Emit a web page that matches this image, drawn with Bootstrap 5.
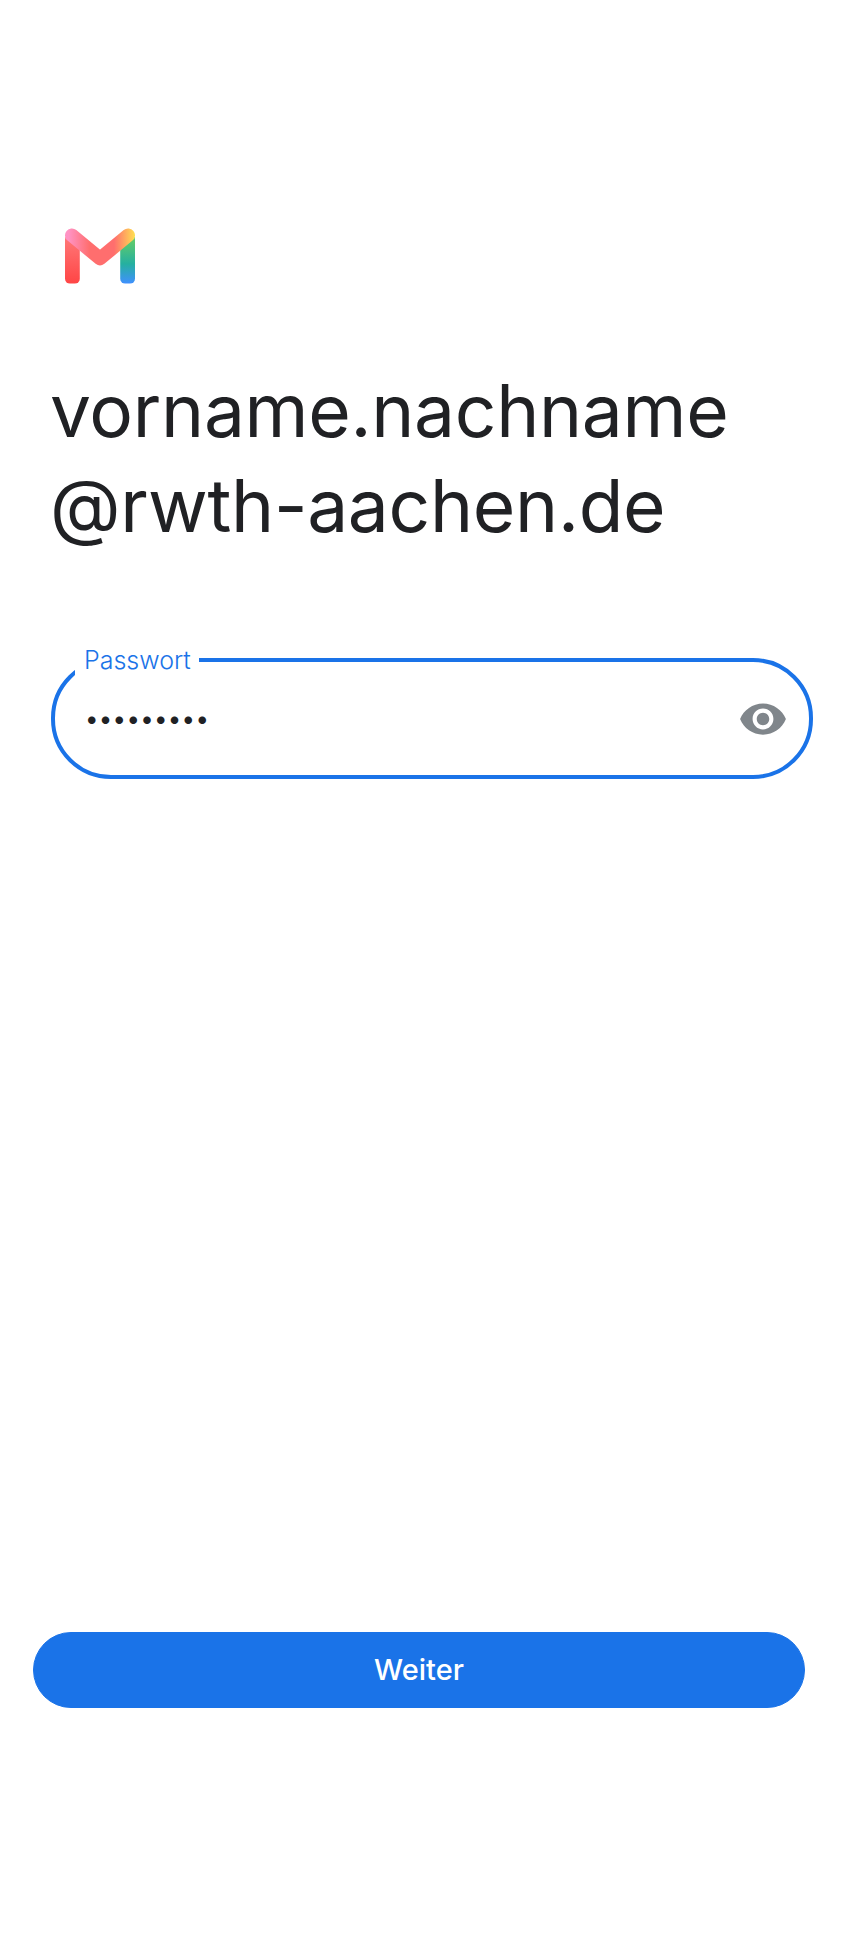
<!DOCTYPE html>
<html lang="de">
<head>
  <meta charset="UTF-8" />
  <meta name="viewport" content="width=device-width, initial-scale=1" />
  <title>Passwort</title>
  <link href="https://cdn.jsdelivr.net/npm/bootstrap@5.3.3/dist/css/bootstrap.min.css" rel="stylesheet" />
  <style>
    body {
      background: #fff;
      color: #202124;
      font-family: "Inter", "Liberation Sans", sans-serif;
    }
    .seite {
      height: 1939px;
      padding: 228px 51px 231px 33px;
    }
    .gmail-logo {
      width: 70px;
      height: 56px;
      margin-left: 32px;
    }
    .konto {
      margin: 79px 0 0 17px;
      font-family: "Inter", sans-serif;
      font-size: 73px;
      line-height: 95px;
      font-weight: 400;
      letter-spacing: -0.3px;
      color: #202124;
    }
    .feld {
      height: 121px;
      margin: 105px 0 0 18px;
      border: 4px solid #1a73e8;
      border-radius: 60px;
      padding: 0 21px 0 30px;
    }
    .feld-label {
      position: absolute;
      left: 20px;
      top: -16px;
      padding: 0 8px 0 9px;
      background: #fff;
      color: #1a73e8;
      font-size: 25px;
      font-weight: 300;
      line-height: 29px;
    }
    .feld-input,
    .feld-input:focus {
      border: 0;
      box-shadow: none;
      padding: 0;
      background: transparent;
      color: #202124;
      font-size: 24px;
      letter-spacing: 0.3px;
    }
    .auge {
      width: 50px;
      height: 50px;
      fill: #80868b;
    }
    .weiter-btn {
      width: 772px;
      height: 76px;
      border-radius: 38px;
      font-size: 29px;
      font-weight: 500;
      --bs-btn-bg: #1a73e8;
      --bs-btn-border-color: #1a73e8;
      --bs-btn-hover-bg: #1a73e8;
      --bs-btn-hover-border-color: #1a73e8;
    }
  </style>
</head>
<body>
  <main class="seite d-flex flex-column">
    <svg class="gmail-logo flex-shrink-0" viewBox="0 0 71 56" role="img" aria-label="Gmail">
      <defs>
        <linearGradient id="linksG" x1="0" y1="0" x2="0" y2="1">
          <stop offset="0" stop-color="#ff7b7b" />
          <stop offset="1" stop-color="#ff4545" />
        </linearGradient>
        <linearGradient id="rechtsG" x1="0" y1="0" x2="0" y2="1">
          <stop offset="0.15" stop-color="#5cc96e" />
          <stop offset="0.6" stop-color="#25b0a0" />
          <stop offset="1" stop-color="#4090ff" />
        </linearGradient>
        <linearGradient id="mitteG" gradientUnits="userSpaceOnUse" x1="0" y1="0" x2="71" y2="0">
          <stop offset="0.05" stop-color="#ff93c4" />
          <stop offset="0.35" stop-color="#ff6e6e" />
          <stop offset="0.7" stop-color="#ff6e6e" />
          <stop offset="1" stop-color="#ffe050" />
        </linearGradient>
      </defs>
      <rect x="0" y="6" width="15" height="50" rx="5" fill="url(#linksG)" />
      <rect x="56" y="6" width="15" height="50" rx="5" fill="url(#rechtsG)" />
      <path d="M7 7 35.5 30.5 64 7" fill="none" stroke="url(#mitteG)" stroke-width="14" stroke-linecap="round" stroke-linejoin="round" />
    </svg>

    <h1 class="konto">vorname.nachname<br />@rwth-aachen.de</h1>

    <div class="feld position-relative d-flex align-items-center">
      <label class="feld-label" for="passwort">Passwort</label>
      <input class="form-control feld-input" id="passwort" type="password" value="123456789" />
      <svg class="auge flex-shrink-0" viewBox="0 0 24 24" aria-hidden="true">
        <path d="M12 4.5C7 4.5 2.73 7.61 1 12c1.73 4.39 6 7.5 11 7.5s9.27-3.11 11-7.5c-1.73-4.39-6-7.5-11-7.5zM12 17c-2.76 0-5-2.24-5-5s2.24-5 5-5 5 2.24 5 5-2.24 5-5 5zm0-8c-1.66 0-3 1.34-3 3s1.34 3 3 3 3-1.34 3-3-1.34-3-3-3z" />
      </svg>
    </div>

    <button type="button" class="btn btn-primary weiter-btn mt-auto">Weiter</button>
  </main>

  <script src="https://cdn.jsdelivr.net/npm/bootstrap@5.3.3/dist/js/bootstrap.bundle.min.js"></script>
</body>
</html>
